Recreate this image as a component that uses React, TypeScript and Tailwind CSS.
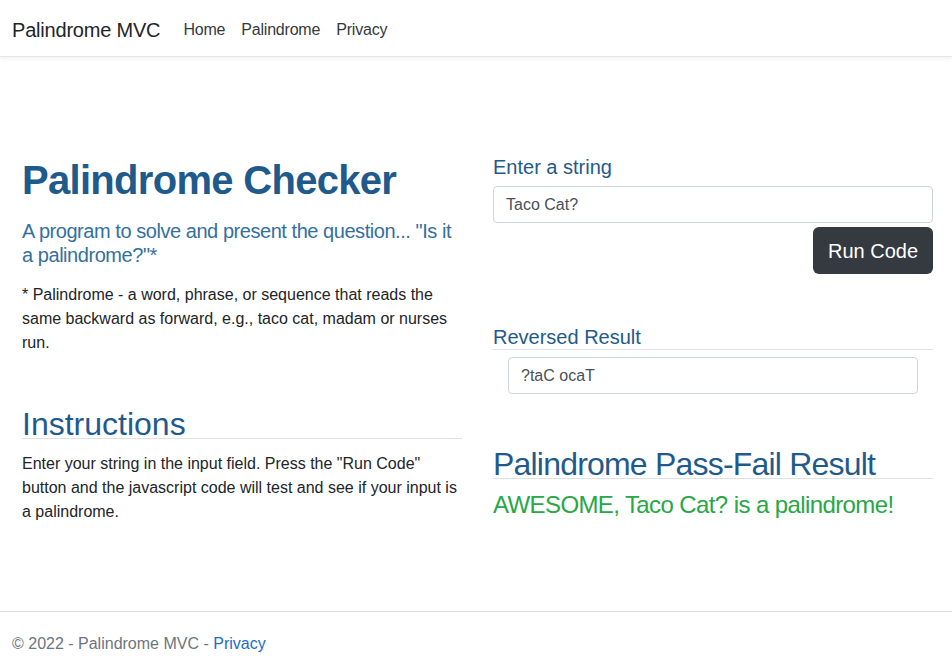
import React from 'react';

const font = { fontFamily: '"Liberation Sans", Arial, sans-serif' };

function NavBar() {
  return (
    <nav className="flex h-[57px] items-center border-b border-[#e5e5e5] bg-white px-3 pt-[4px] shadow-[0_2px_4px_rgba(0,0,0,0.05)]">
      <a className="mr-[23px] text-[20px] tracking-[-0.2px] text-[#212529]">Palindrome MVC</a>
      <ul className="flex items-center text-[16px] tracking-[-0.2px] text-[#343a40]">
        <li className="pr-2">Home</li>
        <li className="px-2">Palindrome</li>
        <li className="px-2">Privacy</li>
      </ul>
    </nav>
  );
}

function LeftColumn() {
  return (
    <div className="mt-[1px]">
      <h1 className="text-[40px] font-bold leading-[48px] tracking-[-0.7px] text-[#1f5a8c]">Palindrome Checker</h1>
      <p className="mt-[15px] text-[20px] font-light leading-[24px] tracking-[-0.45px] text-[#34709f]">
        A program to solve and present the question... "Is it a palindrome?"*
      </p>
      <p className="mt-[16px] text-[16px] leading-[24px] text-[#212529]">
        * Palindrome - a word, phrase, or sequence that reads the same backward as forward, e.g., taco cat, madam or
        nurses run.
      </p>
      <h2 className="mt-[55px] border-b border-[#dee2e6] text-[32px] leading-[28px] text-[#1f5a8c]">Instructions</h2>
      <p className="mt-[13px] text-[16px] leading-[24px] text-[#212529]">
        Enter your string in the input field. Press the "Run Code" button and the javascript code will test and see if
        your input is a palindrome.
      </p>
    </div>
  );
}

function RightColumn() {
  return (
    <div className="flex flex-col">
      <label className="text-[20px] leading-[24px] text-[#1f5a8c]">Enter a string</label>
      <input
        readOnly
        value="Taco Cat?"
        className="mt-[7px] h-[37px] w-full rounded border border-[#ced4da] px-[12px] text-[16px] text-[#495057] outline-none"
      />
      <button
        type="button"
        className="mt-[4px] h-[47px] w-[120px] self-end rounded-md bg-[#343a40] text-[20px] text-white"
      >
        Run Code
      </button>
      <h4 className="mt-[52px] border-b border-[#dee2e6] text-[20px] leading-[23px] text-[#1f5a8c]">Reversed Result</h4>
      <input
        readOnly
        value="?taC ocaT"
        className="mx-[15px] mt-[7px] h-[37px] rounded border border-[#ced4da] px-[12px] text-[16px] text-[#495057] outline-none"
      />
      <h2 className="mt-[56px] border-b border-[#dee2e6] text-[32px] leading-[28px] tracking-[-0.8px] text-[#1f5a8c]">
        Palindrome Pass-Fail Result
      </h2>
      <p className="mt-[11px] text-[24px] leading-[29px] tracking-[-0.6px] text-[#28a745]">
        AWESOME, Taco Cat? is a palindrome!
      </p>
    </div>
  );
}

export default function App() {
  return (
    <div style={font} className="flex min-h-screen flex-col bg-white">
      <NavBar />
      <main className="grid grid-cols-2 gap-x-[31px] pl-[22px] pr-[19px] pt-[98px]">
        <LeftColumn />
        <RightColumn />
      </main>
      <footer className="mt-auto h-[58px] border-t border-[#dee2e6] px-3 pt-[7px] text-[16px] leading-[50px] text-[#6c757d]">
        © 2022 - Palindrome MVC - <a className="text-[#1b6ec2]">Privacy</a>
      </footer>
    </div>
  );
}
